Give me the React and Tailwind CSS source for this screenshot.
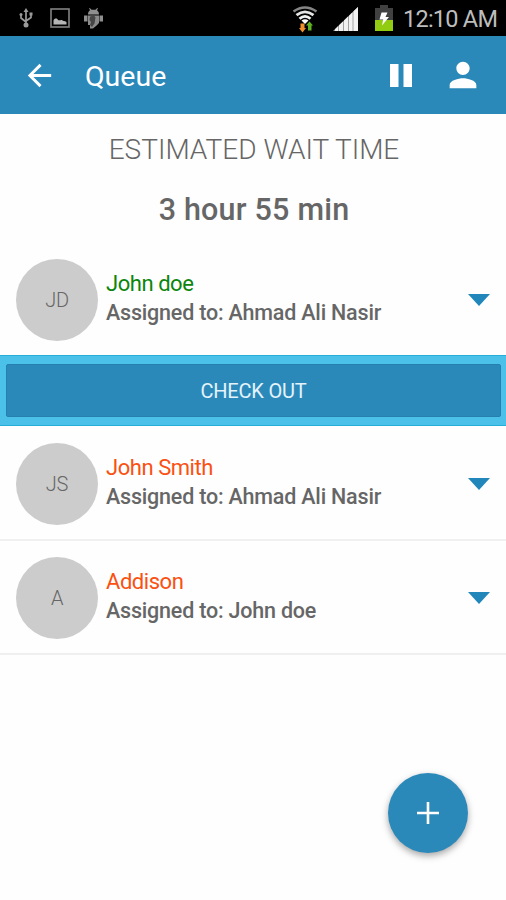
const queue = [
  { id: 1, initials: 'JD', name: 'John doe', color: 'text-[#0c850c]', assigned: 'Ahmad Ali Nasir', open: true },
  { id: 2, initials: 'JS', name: 'John Smith', color: 'text-[#fa5011]', assigned: 'Ahmad Ali Nasir' },
  { id: 3, initials: 'A', name: 'Addison', color: 'text-[#fa5011]', assigned: 'John doe' },
]

function UsbIcon() {
  return (
    <svg className="w-[14px] h-[20px]" viewBox="0 0 14 20" fill="none" stroke="#9a9a9a" strokeWidth="1.7">
      <path d="M7 3v13M2 6.500v3.500l5 4M12 6v3.500L7 13" />
      <path d="M4.500 4L7 0l2.500 4z" fill="#9a9a9a" stroke="none" />
      <circle cx="7" cy="17" r="2.500" fill="#9a9a9a" stroke="none" />
      <circle cx="2" cy="6.500" r="1.500" fill="#9a9a9a" stroke="none" />
      <path d="M10.500 4.500h3v3h-3z" fill="#9a9a9a" stroke="none" />
    </svg>
  )
}

function PictureIcon() {
  return (
    <svg className="w-[20px] h-[20px]" viewBox="0 0 20 20">
      <rect x="1" y="1" width="18" height="18" fill="none" stroke="#828282" strokeWidth="1.600" />
      <path d="M3.500 16.500v-4c1-2.500 3.500-2.500 4.500-.5 1.500 1 2.500-.5 4 0 1 1.500 2.500.5 4.500 2v2.500z" fill="#b5b5b5" />
    </svg>
  )
}

function DebugIcon() {
  return (
    <svg className="w-[19px] h-[21px]" viewBox="0 0 19 21">
      <path d="M4 6.500C4 4 5 3 6.200 2.300L5 .5l.8-.5L7.500 1.800h4L13.200 0l.8.5-1.200 1.800C14 3 15 4 15 6.500z" fill="#8f8f8f" />
      <path d="M0 7.500h3.500v6H0zM15.500 7.500H19v6h-3.500z" fill="#8f8f8f" />
      <path d="M4 7.500h11v7.500l-3 3-3 2.500H6V17H4z" fill="#8b8b8b" />
      <path d="M6 8.500l4-1 1.500 2-1 6L8 19l-2-2 1-3-1.500-2z" fill="#464646" />
    </svg>
  )
}

function WifiIcon() {
  return (
    <svg className="w-[26px] h-[28px]" viewBox="0 0 26 28" fill="none">
      <path d="M1.500 5.500Q13-2.500 24.500 5.500" stroke="#858585" strokeWidth="2.600" />
      <path d="M4.500 9.200Q13 2.500 21.500 9.200" stroke="#e5e5e5" strokeWidth="2.800" />
      <path d="M7.500 12.800Q13 8 18.500 12.800" stroke="#f2f2f2" strokeWidth="2.800" />
      <path d="M9.500 14.500Q13 12 16.500 14.500L13 18z" fill="#fff" />
      <path d="M8.500 17.500h4v4.500h1.500L10.500 26.500 7 22h1.500z" fill="#f0912e" />
      <path d="M16 24.500v-5h-2l3.500-4 3.500 4h-1.500v5z" fill="#5fb324" />
    </svg>
  )
}

function SignalIcon() {
  return (
    <svg className="w-[26px] h-[24px]" viewBox="0 0 26 24">
      <path d="M0 24L25 0v24z" fill="#a2a2a2" />
      <path d="M2 22.200l3-2.900V24H2zM6 18.300l4-3.900V24H6zM11 13.500l4-3.900V24h-4zM16 8.700l3.500-3.400V24H16zM20.500 4.300L25 0v24h-4.500z" fill="#f2f2f2" />
    </svg>
  )
}

function BatteryIcon() {
  return (
    <svg className="w-[18px] h-[26px]" viewBox="0 0 18 26">
      <path d="M5 0h8v3h5v13H0V3h5z" fill="#414141" />
      <path d="M0 15h18v11H0z" fill="#91cc12" />
      <path d="M6.500 7.500h6L10.500 12H14l-7 8.500 1.200-6H4.500z" fill="#fff" />
    </svg>
  )
}

function StatusBar() {
  return (
    <div className="h-[36px] bg-black flex items-start">
      <div className="flex pl-[19px] pt-[8px]">
        <UsbIcon />
        <div className="ml-[17px]"><PictureIcon /></div>
        <div className="ml-[14px]"><DebugIcon /></div>
      </div>
      <div className="ml-auto flex items-start pr-[9px]">
        <div className="pt-[6px]"><WifiIcon /></div>
        <div className="pt-[7px] ml-[15px]"><SignalIcon /></div>
        <div className="pt-[5px] ml-[16px]"><BatteryIcon /></div>
        <span className="w-[94px] ml-[10px] pt-px text-[23.500px] leading-[36px] tracking-[-0.75px] text-[#bdbdbd] whitespace-nowrap">12:10 AM</span>
      </div>
    </div>
  )
}

function AppBar() {
  return (
    <header className="h-[78px] bg-[#2b89ba] flex items-center text-white">
      <svg className="w-[35px] h-[35px] ml-[22px]" viewBox="0 0 24 24" fill="currentColor">
        <path d="M20 11H7.830l5.590-5.590L12 4l-8 8 8 8 1.410-1.410L7.830 13H20v-2z" />
      </svg>
      <h1 className="ml-[28px] pt-[3px] text-[28.500px] leading-[32px] font-normal">Queue</h1>
      <svg className="w-[22px] h-[23px] ml-auto" viewBox="0 0 22 23" fill="currentColor">
        <path d="M0 0h8.500v23H0zM13.500 0H22v23h-8.500z" />
      </svg>
      <svg className="w-[40px] h-[40px] ml-[31px] mr-[23px]" viewBox="0 0 24 24" fill="currentColor">
        <path d="M12 12c2.210 0 4-1.790 4-4s-1.790-4-4-4-4 1.790-4 4 1.790 4 4 4zm0 2c-2.670 0-8 1.340-8 4v2h16v-2c0-2.660-5.330-4-8-4z" />
      </svg>
    </header>
  )
}

function QueueRow({ item }) {
  return (
    <li>
      <div className={item.open ? 'h-[112px] pt-[16px] px-[16px] flex' : 'h-[114px] pt-[16px] px-[16px] flex border-b-2 border-[#f0f0f0]'}>
        <div className="w-[82px] h-[82px] shrink-0 rounded-full bg-[#cccccc] flex items-center justify-center text-[20px] tracking-[-0.3px] font-light text-[#666]">
          {item.initials}
        </div>
        <div className="ml-[8px] pt-[10px] whitespace-nowrap">
          <p className={`text-[22px] leading-[29px] tracking-[-0.450px] ${item.color}`}>{item.name}</p>
          <p className="text-[21.500px] leading-[29px] tracking-[-0.200px] font-medium text-[#666]">Assigned to: {item.assigned}</p>
        </div>
        <svg className="w-[22px] h-[12px] ml-auto mt-[35px]" viewBox="0 0 22 12">
          <path d="M0 0h22L11 12z" fill="#2187bb" />
        </svg>
      </div>
      {item.open && (
        <div className="h-[71px] bg-[#4bc0e8] border-y border-[#27add8] pt-[8px] pl-[6px] pr-[5px] mb-px">
          <button className="w-full h-[53px] block rounded-[2px] bg-[#2b89ba] border border-[#2680ad] text-[20px] tracking-[-0.200px] pt-px text-[#e4f3fb]">
            CHECK OUT
          </button>
        </div>
      )}
    </li>
  )
}

export default function App() {
  return (
    <div className="relative w-[506px] h-[900px] overflow-hidden bg-[#fefefe] font-['Roboto',sans-serif]">
      <StatusBar />
      <AppBar />
      <section className="h-[129px] text-center text-[#666]">
        <h2 className="pt-[18px] text-[28px] leading-[36px] font-light pl-[2px]">ESTIMATED WAIT TIME</h2>
        <p className="pt-[24px] text-[30.500px] leading-[36px] tracking-[0.200px] font-medium pl-[2px]">3 hour 55 min</p>
      </section>
      <ul>
        {queue.map((item) => (
          <QueueRow key={item.id} item={item} />
        ))}
      </ul>
      <button className="absolute left-[388px] top-[773px] w-[80px] h-[80px] rounded-full bg-[#2b89ba] shadow-[0_3px_7px_rgba(0,0,0,0.35)] flex items-center justify-center">
        <svg className="w-[22px] h-[22px]" viewBox="0 0 22 22" stroke="#fff" strokeWidth="2.600">
          <path d="M11 0v22M0 11h22" />
        </svg>
      </button>
    </div>
  )
}
